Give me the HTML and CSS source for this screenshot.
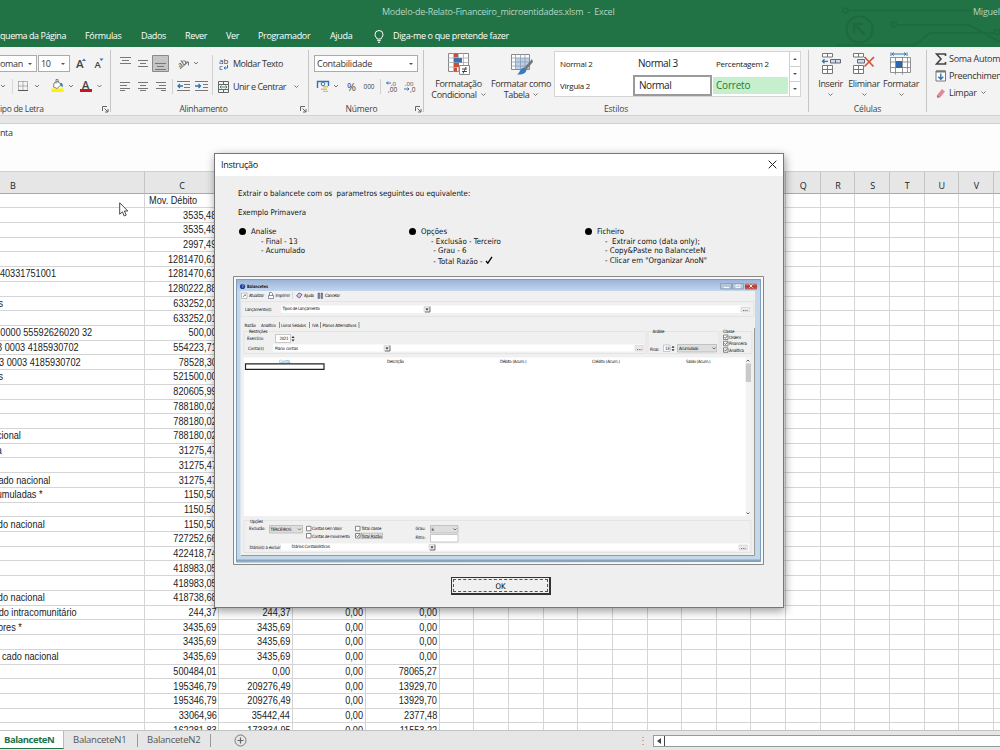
FILE: index.html
```html
<!DOCTYPE html>
<html lang="pt-PT">
<head>
    <meta charset="UTF-8">
    <meta name="viewport" content="width=device-width, initial-scale=1.0">
    <title>Modelo-de-Relato-Financeiro_microentidades.xlsm - Excel</title>
    <link rel="stylesheet" href="styles.css">
</head>
<body>
    <header class="top">
        <svg class="circuit" viewBox="830 0 170 47" width="170" height="47">
            <g fill="none" stroke="#1e693f" stroke-width="1.6">
                <circle cx="845.500" cy="10.500" r="2.500"/><path d="M848 10.500H972"/>
                <circle cx="894" cy="24.500" r="2.500"/><path d="M897 25H969L1000 42"/>
                <path d="M836 45H915L930 33H995"/><circle cx="997" cy="32" r="2.500"/>
                <circle cx="859.500" cy="29.500" r="13" stroke-width="2.200"/>
                <path d="M865 35L855 25M854 33V24H863" stroke-width="2.600"/>
            </g>
        </svg>
        <div class="title-row">
            <span class="doc-title">Modelo-de-Relato-Financeiro_microentidades.xlsm &nbsp;-&nbsp; Excel</span>
            <span class="user">Miguel</span>
        </div>
        <nav class="menu">
            <span class="m-esquema">quema da Página</span>
            <span class="m-formulas">Fórmulas</span>
            <span class="m-dados">Dados</span>
            <span class="m-rever">Rever</span>
            <span class="m-ver">Ver</span>
            <span class="m-prog">Programador</span>
            <span class="m-ajuda">Ajuda</span>
            <svg class="bulb" viewBox="0 0 10 13" width="10" height="13"><path d="M3 9C3 7.500 1 7 1 4.500a4 4 0 0 1 8 0C9 7 7 7.500 7 9ZM3.300 10.600H6.700M4 12.300H6" fill="none" stroke="#fff" stroke-width="1"/></svg>
            <span class="m-tell">Diga-me o que pretende fazer</span>
        </nav>
    </header>

    <section class="ribbon">
        <div class="group g-font">
            <div class="row">
                <span class="combo c-font">oman<i class="tri"></i></span>
                <span class="combo c-size">10<i class="tri"></i></span>
                <svg viewBox="70 55 40 18" width="40" height="18">
                    <text x="76" y="68" class="ico-a" font-size="11.500">A</text><path d="M82 61l2-2.500 2 2.500z" fill="#2f75b5"/>
                    <text x="94.500" y="68" class="ico-a" font-size="9.500">A</text><path d="M99.500 58.500h4l-2 2.500z" fill="#2f75b5"/>
                </svg>
            </div>
            <svg class="strip" viewBox="0 76 110 20" width="110" height="20">
                <path d="M1 85l2 2 2-2M35 85l2 2 2-2M69 85l2 2 2-2M97.500 85l2 2 2-2" class="chev"/>
                <path d="M12.500 79V94" stroke="#d8d8d8"/>
                <path d="M18.500 81.500H27.500V90M18.500 81.500V90M23 81.500V90M18.500 86H27.500" fill="none" stroke="#777" stroke-dasharray="1 1"/><path d="M18 90.500H28" stroke="#555"/>
                <path d="M51.500 88.500H63.500V92H51.500z" fill="#fff200"/><path d="M54 83l4-2 3 4-4 3.500-3.500-1.500zM56 83.500V79.500h2V83" fill="#fff" stroke="#777" stroke-width=".9"/><path d="M60 83c3 0 3 2 2.500 4.500-1.500-1-1.500-3-2.500-4.500z" fill="#2f75b5"/>
                <text x="82" y="88.500" class="ico-a" font-size="11">A</text><path d="M80 89H92V92H80z" fill="#c4161c"/>
            </svg>
            <div class="label"><span class="l-font">ipo de Letra</span><svg class="launch" viewBox="0 0 7 7" width="7" height="7"><path d="M.5 5V.5H5M2.500 2.500L6 6M6 3V6H3"/></svg></div>
        </div>

        <div class="group g-align">
            <svg class="align-icons" viewBox="111 53 106 44" width="106" height="44">
                <path d="M152.500 55.500H168.500V71.500H152.500z" fill="#c5c5c5" stroke="#8a8a8a"/>
                <g stroke="#777" stroke-width="1" fill="none">
                    <path d="M120 57.500H131M122 60.500H129M120 63.500H131M138 60.500H148M140 63.500H146M138 66.500H148M155 63.500H166M157 66.500H164M155 69.500H166"/>
                    <path d="M120 82.500H130M120 85.500H127M120 88.500H130M120 90.500H125M138 82.500H148M140 85.500H146M138 88.500H148M140 90.500H146M156 82.500H166M159 85.500H166M156 88.500H166M161 90.500H166"/>
                    <path d="M177 81.500H190M184 84.500H190M184 87.500H190M177 90.500H190M195 81.500H208M203 84.500H208M203 87.500H208M195 90.500H208"/>
                    <path d="M180 69l8-7M185 62h3.500v3.500"/>
                </g>
                <path d="M183 86H178M180 84l-2 2 2 2M195 86H200.500M198.500 84l2 2-2 2" fill="none" stroke="#2f75b5" stroke-width="1.300"/>
                <text x="178" y="66" font-size="7.500" class="ico-t" transform="rotate(-35 182 64)">ab</text>
                <path d="M194 62l2 2 2-2" class="chev"/>
                <path d="M172.500 79V94M212.500 55V95" stroke="#d0d0d0"/>
            </svg>
            <div class="wraps">
                <div class="wrap-row"><svg viewBox="217 56 12 14" width="12" height="14"><text x="219" y="63" font-size="8" class="ico-t">ab</text><text x="219" y="69" font-size="8" class="ico-t">c</text><path d="M227.500 64v3H224M225.500 65.500L224 67l1.500 1.500" fill="none" stroke="#2f75b5"/></svg><span class="t-moldar">Moldar Texto</span></div>
                <div class="wrap-row"><svg viewBox="217 80 12 12" width="12" height="12"><path d="M218.500 80.500H228.500V91.500H218.500zM218.500 83.500H228.500M218.500 88.500H228.500M223.500 80.500V83.500M223.500 88.500V91.500" fill="none" stroke="#666"/><path d="M220 86H227M221.500 84.500L220 86l1.500 1.500M225.500 84.500L227 86l-1.500 1.500" fill="none" stroke="#22764c" stroke-width=".8"/></svg><span class="t-unir">Unir e Centrar</span><svg class="c-unir" viewBox="0 0 5 3" width="5" height="3"><path d="M.5.500l2 2 2-2" class="chev"/></svg></div>
            </div>
            <div class="label"><span class="l-align">Alinhamento</span><svg class="launch" viewBox="0 0 7 7" width="7" height="7"><path d="M.5 5V.5H5M2.500 2.500L6 6M6 3V6H3"/></svg></div>
        </div>

        <div class="group g-num">
            <div class="row"><span class="combo c-num">Contabilidade<i class="tri"></i></span></div>
            <svg class="strip" viewBox="309 76 114 20" width="114" height="20">
                <path d="M317.500 88V81.500H328.500V86" fill="none" stroke="#2f75b5" stroke-width="1.400"/><circle cx="323" cy="84" r="1.800" fill="none" stroke="#2f75b5"/>
                <path d="M323 86h5v1.500h-5zM321 88.500h6v1.500h-6zM323 90.800h5v1.200h-5z" fill="#e0bd77"/>
                <path d="M334 85l2 2 2-2" class="chev"/>
                <text x="347" y="90.500" class="ico-t" font-size="11" textLength="9" lengthAdjust="spacingAndGlyphs">%</text>
                <text x="363.500" y="88.500" class="ico-t" font-size="7" textLength="11" lengthAdjust="spacingAndGlyphs">000</text>
                <path d="M380.500 79V94" stroke="#d0d0d0"/>
                <text x="391" y="85.500" class="ico-t" font-size="6">,0</text><text x="388" y="91.500" class="ico-t" font-size="6.500">,00</text>
                <text x="405" y="85.500" class="ico-t" font-size="6">,00</text><text x="410" y="91.500" class="ico-t" font-size="6.500">,0</text>
                <path d="M391 83H386.500M388 81.500L386.500 83l1.500 1.500M404 89H409M407.500 87.500L409 89l-1.500 1.500" fill="none" stroke="#2f75b5"/>
            </svg>
            <div class="label"><span class="l-num">Número</span><svg class="launch" viewBox="0 0 7 7" width="7" height="7"><path d="M.5 5V.5H5M2.500 2.500L6 6M6 3V6H3"/></svg></div>
        </div>

        <div class="group g-styles">
            <div class="styles-row">
                <div class="big b-cond">
                    <svg viewBox="448 52 24 24" width="24" height="24">
                        <path d="M449.500 53.500H469.500V71.500H449.500z" fill="#fff" stroke="#888"/><path d="M449 58H470M449 62.500H470M449 67H470M454.500 53V72M459.500 53V72M464.500 53V72" stroke="#aaa" stroke-width=".8"/>
                        <path d="M455 53.500h4v4h-4zM455 63h5v4h-5zM455 67.500h3v4h-3z" fill="#c8513b"/><path d="M455 58h8v4.500h-8z" fill="#3f6fae"/>
                        <path d="M460.500 65.500H470.500V74.500H460.500z" fill="#fff" stroke="#888"/><path d="M463 69H468M463 71.500H468M467 67l-3 6.500" stroke="#333" stroke-width=".9"/>
                    </svg>
                    <span class="t-formatacao">Formatação</span>
                    <span class="t-cond">Condicional<svg viewBox="0 0 5 3" width="5" height="3"><path d="M.5.500l2 2 2-2" class="chev"/></svg></span>
                </div>
                <div class="big b-table">
                    <svg viewBox="508 52 24 24" width="24" height="24">
                        <path d="M510.500 54.500H528.500V69.500H510.500z" fill="#fff" stroke="#888"/><path d="M514.500 58H528V69H514.500z" fill="#bcd0e8"/><path d="M510 58H529M510 62H529M510 66H529M514.500 54V70M519.500 54V70M524 54V70" stroke="#8d9cae" stroke-width=".8"/>
                        <path d="M531 59l-8 9 2 2 7-8z" fill="#777"/><path d="M522.500 67.500l3 2.500c-1 4-5 5-9.500 4.500 3-1.500 2.500-5.500 6.500-7z" fill="#3a7abd"/>
                    </svg>
                    <span class="t-formatar">Formatar como</span>
                    <span class="t-tabela">Tabela<svg viewBox="0 0 5 3" width="5" height="3"><path d="M.5.500l2 2 2-2" class="chev"/></svg></span>
                </div>
                <div class="gallery">
                    <div class="cells">
                        <span class="small">Normal 2</span><span class="large">Normal 3</span><span class="small pct">Percentagem 2</span>
                        <span class="small">Vírgula 2</span><span class="large selected">Normal</span><span class="large good">Correto</span>
                    </div>
                    <div class="scroller">
                        <span><i class="tri up"></i></span><span><i class="tri"></i></span><span class="more"><i class="tri"></i></span>
                    </div>
                </div>
            </div>
            <div class="label"><span class="l-styles">Estilos</span></div>
        </div>

        <div class="group g-cells">
            <div class="cells-row">
                <div class="big">
                    <svg viewBox="819 52 22 24" width="22" height="24"><path d="M821.500 53.500H831.500V57H821.500zM826.500 53.500V57M821.500 65.500H831.500V73.500H821.500zM826.500 65.500V73.500M821.500 69.500H831.500" fill="#fff" stroke="#777"/><path d="M829.500 59.500H839.500V63H829.500zM834.500 59.500V63" fill="#cfdcec" stroke="#667"/><path d="M827 61.300H821.500M823.500 59.300l-2 2 2 2" fill="none" stroke="#2f75b5" stroke-width="1.300"/></svg>
                    <span class="t-ins">Inserir</span><svg class="bc" viewBox="0 0 5 3" width="5" height="3"><path d="M.5.500l2 2 2-2" class="chev"/></svg>
                </div>
                <div class="big">
                    <svg viewBox="852 52 24 24" width="24" height="24"><path d="M853.500 53.500H863.500V57H853.500zM858.500 53.500V57M853.500 65.500H863.500V73.500H853.500zM858.500 65.500V73.500M853.500 69.500H863.500" fill="#fff" stroke="#777"/><path d="M857.500 59.500H864.500V63H857.500z" fill="#cfdcec" stroke="#667"/><path d="M864.500 57l9 9.500M874 57l-9.500 9.500" stroke="#d2553a" stroke-width="1.700"/></svg>
                    <span class="t-eli">Eliminar</span><svg class="bc" viewBox="0 0 5 3" width="5" height="3"><path d="M.5.500l2 2 2-2" class="chev"/></svg>
                </div>
                <div class="big">
                    <svg viewBox="889 52 24 24" width="24" height="24"><path d="M891 52.500V56M907 52.500V56M892 54H906M894 52.500L892 54l2 1.500M904 52.500L906 54l-2 1.500" fill="none" stroke="#2f75b5"/><path d="M890.500 57.500H910.500V72.500H890.500zM890.500 62H910.500M890.500 67.500H910.500M895.500 57.500V74.500M902.500 57.500V74.500M907.500 57.500V72.500" fill="#fff" stroke="#888" stroke-width=".9"/><path d="M896 61H902V68H896z" fill="#2e68a8"/></svg>
                    <span class="t-fmt">Formatar</span><svg class="bc" viewBox="0 0 5 3" width="5" height="3"><path d="M.5.500l2 2 2-2" class="chev"/></svg>
                </div>
            </div>
            <div class="label"><span class="l-cells">Células</span></div>
        </div>

        <div class="group g-edit">
            <div class="edit-row"><svg viewBox="0 0 12 12" width="12" height="12"><path d="M10.500 3V1H1.500L6 6 1.500 11H10.500V9" fill="none" stroke="#444" stroke-width="1.600"/></svg><span class="t-soma">Soma Autom</span></div>
            <div class="edit-row"><svg viewBox="0 0 12 12" width="12" height="12"><path d="M1 1H10.500V11H1z" fill="#fff" stroke="#777"/><path d="M1 1.500H10.500" stroke="#777" stroke-width="2"/><path d="M5.800 3.500V9M3.300 6.700L5.800 9.200 8.300 6.700" fill="none" stroke="#2f75b5" stroke-width="1.400"/></svg><span class="t-preen">Preenchimen</span></div>
            <div class="edit-row"><svg viewBox="0 0 12 12" width="12" height="12"><path d="M7 2l3 2.500-4.500 5.500-3-2.500z" fill="#e5869a"/><path d="M2.300 7.500l3 2.500-1 .8-2.500-.3z" fill="#b46c7c"/></svg><span class="t-limpar">Limpar</span><svg class="bc" viewBox="0 0 5 3" width="5" height="3"><path d="M.5.500l2 2 2-2" class="chev"/></svg></div>
        </div>
    </section>

    <div class="formula-gap"></div>
    <div class="formula-bar">nta</div>

    <main class="sheet">
        <div class="sheet-row head" id="head"></div>
        <div id="rows"></div>
    </main>

    <footer class="tabs">
        <span class="tab active">BalanceteN</span>
        <span class="tab">BalanceteN1</span>
        <span class="tab">BalanceteN2</span>
        <svg class="plus" viewBox="0 0 13 13" width="13" height="13"><circle cx="6.500" cy="6.500" r="5.500" fill="none" stroke="#777"/><path d="M6.500 3.500V9.500M3.500 6.500H9.500" stroke="#666" stroke-width="1.200"/></svg>
        <span class="dots">⋮</span>
        <div class="hscroll"><span><i class="tri left"></i></span></div>
    </footer>

    <svg class="cursor" viewBox="0 0 10 15" width="10" height="15"><path d="M.7.800V12.300L3.400 9.800 5.200 14 7.200 13.100 5.400 9H8.800z" fill="#fff" stroke="#333" stroke-width=".9"/></svg>

    <div class="dialog">
        <div class="dialog-title"><span>Instrução</span><svg viewBox="0 0 9 9" width="9" height="9"><path d="M.7.700l7.600 7.600M8.300.700L.7 8.300" stroke="#222" stroke-width="1"/></svg></div>
        <div class="dialog-body">
            <p class="lead">Extrair o balancete com os&nbsp; parametros seguintes ou equivalente:</p>
            <p class="example">Exemplo Primavera</p>
            <div class="notes">
                <div class="note n1"><b class="dot"></b><ul><li class="h">Analise</li><li>- Final - 13</li><li>- Acumulado</li></ul></div>
                <div class="note n2"><b class="dot"></b><ul><li class="h">Opções</li><li>- Exclusão - Terceiro</li><li>&nbsp;- Grau - 6</li><li>&nbsp;- Total Razão - <svg viewBox="0 0 8 8" width="8" height="8"><path d="M1 5L2.800 7.200 7 .8" fill="none" stroke="#000" stroke-width="1.300"/></svg></li></ul></div>
                <div class="note n3"><b class="dot"></b><ul><li class="h">Ficheiro</li><li>-&nbsp; Extrair como (data only);</li><li>- Copy&amp;Paste no BalanceteN</li><li>- Clicar em "Organizar AnoN"</li></ul></div>
            </div>

            <!-- Balancetes window, example of the extraction settings -->
            <svg class="shot" viewBox="233 276 531 289" width="531" height="289">
                <defs>
                    <linearGradient id="bar" x1="0" y1="0" x2="0" y2="1"><stop offset="0" stop-color="#97b2d9"/><stop offset="1" stop-color="#c3d6ec"/></linearGradient>
                    <linearGradient id="red" x1="0" y1="0" x2="0" y2="1"><stop offset="0" stop-color="#d9a09a"/><stop offset=".5" stop-color="#b23a30"/><stop offset="1" stop-color="#c8685c"/></linearGradient>
                </defs>
                <path d="M233.500 276.500H763.500V564.500H233.500z" fill="#f8f8f8" stroke="#888"/>
                <path d="M236 279H761V562H236z" fill="#c5d8ea"/>
                <path d="M236 279H761V291H236z" fill="url(#bar)"/>
                <path d="M236.500 562V279.500H760.500V561.500z" fill="none" stroke="#7f9dbd"/>
                <path d="M237 560.500H760" stroke="#86a5bd" stroke-width="2"/>
                <path d="M240.500 291H755V555.500H240.500z" fill="#f0f0f0"/>
                <path d="M241 555.500H754.500V328" fill="none" stroke="#999"/>
                <path d="M720.500 283.500H731.500V289H720.500zM732.500 283.500H743.500V289H732.500z" fill="#b5c6da" stroke="#8295ab" stroke-width=".7"/><path d="M745 283H757V289.500H745z" fill="url(#red)"/>
                <path d="M723.500 287.500H729M736 285H740V287.500H736zM749.500 284.500l3 3M752.500 284.500l-3 3" fill="none" stroke="#fff" stroke-width=".9"/>
                <circle cx="242.500" cy="286.500" r="2.600" fill="#1e3c97"/><text x="241.500" y="288.200" font-size="4.500" fill="#fff">?</text>
                <g class="tiny">
                    <text x="247" y="288.300" textLength="21" lengthAdjust="spacingAndGlyphs" font-weight="bold">Balancetes</text>
                    <text x="249" y="297" textLength="15">Atualizar</text><text x="275.500" y="297" textLength="14.500">Imprimir</text><text x="304" y="297" textLength="10">Ajuda</text><text x="325" y="297" textLength="15">Cancelar</text>
                </g>
                <path d="M241.500 293H247V298.500H241.500z" fill="#fff" stroke="#999" stroke-width=".6"/><path d="M243 297l2-2.500.5 1.500" fill="none" stroke="#375" stroke-width=".8"/>
                <path d="M268.500 295.500H273.500V298.500H268.500zM269.500 295.500V292.500H271.500L272.500 293.500V295.500" fill="#fff" stroke="#57697f" stroke-width=".7"/>
                <path d="M296.500 296l2.500-3 3 1.500-2.500 3.500z" fill="#d9c9ea" stroke="#5b3f86" stroke-width=".8"/>
                <path d="M318 293H319.500V298.500H318zM321 293H322.500V298.500H321z" fill="#7a93b6" stroke="#445" stroke-width=".5"/>
                <path d="M292.500 292V299" stroke="#ccc" stroke-width=".7"/>
                <g fill="none" stroke="#dedede" stroke-width=".7"><path d="M241 301.500H754V316.500H241zM244 331.500H646V353.500H244zM648 331.500H719V353.500H648zM721 331.500H752V353.500H721zM244 520.500H751V552.500H244z"/></g>
                <path d="M281 305.500H750V313H281zM273 344.500H643V351.500H273zM244 357.500H751V516H244zM281 543.500H749V550.500H281z" fill="#fff"/>
                <g fill="#e9e9e9" stroke="#ccc" stroke-width=".6">
                    <path d="M424 306.500H429.500V312H424zM741 307H749.500V312H741zM384 345.500H389.500V351H384zM635 345.500H643V351H635zM429 544.500H434.500V550H429zM739 545H747.500V550H739z"/>
                    <path d="M677.500 344.500H716.500V352H677.500zM269.500 525.500H302.500V533H269.500zM430.500 525.500H458V533H430.500z" fill="#dedede" stroke="#aaa"/>
                    <path d="M275.500 334.500H290.500V342.500H275.500zM663.500 345H670V351.500H663.500zM430.500 534.500H458V542H430.500z" fill="#fff" stroke="#aaa"/>
                </g>
                <path d="M425 312H430V306.500M385 351H390V345.500M430 550H435V544.500" fill="none" stroke="#555" stroke-width=".8"/>
                <path d="M425.500 308.500h3l-1.500 2zM385.500 347.500h3l-1.500 2zM430.500 546.500h3l-1.500 2zM291.500 338h3l-1.500-2zM291.500 339.500h3l-1.500 2zM671.500 347.700h3l-1.500-2zM671.500 349.200h3l-1.500 2z" fill="#222"/>
                <path d="M743 310.500H748M637 349.500H642M741 548.500H746" stroke="#666" stroke-width=".9" stroke-dasharray="1 .8"/>
                <path d="M712.500 347.500l1.500 1.500 1.500-1.500M298 528.500l1.500 1.500 1.500-1.500M453.500 528.500l1.500 1.500 1.500-1.500" fill="none" stroke="#555" stroke-width=".8"/>
                <path d="M745.500 357.500H751V516H745.500z" fill="#f3f3f3"/><path d="M745.800 363.500H751V382H745.800z" fill="#c9c9c9"/><path d="M746.500 361.500L748 360l1.500 1.500M746.500 512.500L748 514l1.500-1.500" fill="none" stroke="#444" stroke-width=".8"/>
                <path d="M279.500 322V328M309.500 322V328M320.500 322V328M359 322V328" stroke="#777" stroke-width=".8"/>
                <path d="M245.500 363.800H324V369.300H245.500z" fill="#fff" stroke="#222" stroke-width="1.200"/>
                <g fill="#fff" stroke="#555" stroke-width=".7"><path d="M723.500 335H728V339.500H723.500zM723.500 341.300H728V345.800H723.500zM723.500 347.800H728V352.300H723.500zM306.500 526.300H311V530.800H306.500zM306.500 533.500H311V538H306.500zM355.500 526.300H360V530.800H355.500zM355.500 533.500H360V538H355.500z"/></g>
                <path d="M724.500 337l1 1.300 1.800-2.300M724.500 343.300l1 1.300 1.800-2.300M724.500 349.800l1 1.300 1.800-2.300M356.500 535.500l1 1.300 1.800-2.300" fill="none" stroke="#333" stroke-width=".7"/>
                <path d="M361 533.200H382.500V538.500H361z" fill="#e3e3e3" stroke="#666" stroke-width=".5" stroke-dasharray="1 .6"/>
                <g class="tiny">
                    <text x="245" y="310.800" textLength="26.500">Lançamento(s)</text><text x="282.500" y="310.300" textLength="37.500">Tipos de Lançamento</text>
                    <text x="244.500" y="326.500" textLength="11.500">Razão</text><text x="261" y="326.500" textLength="15">Analítico</text><text x="281" y="326.500" textLength="25">Livros Selados</text><text x="312" y="326.500" textLength="6.500">IVA</text><text x="322.500" y="326.500" textLength="34">Planos Alternativos</text>
                    <text x="249" y="333" textLength="18.500">Restrições</text><text x="247" y="339.500" textLength="17">Exercício:</text><text x="279.500" y="340.300" textLength="9">2021</text>
                    <text x="248" y="350" textLength="16">Conta(s)</text><text x="275" y="349.500" textLength="23">Plano contas</text>
                    <text x="652.500" y="333" textLength="12">Análise</text><text x="650" y="350.500" textLength="9.500">Final:</text><text x="665" y="350" textLength="4.500">13</text><text x="679" y="350" textLength="19.500">Acumulado</text>
                    <text x="723" y="333" textLength="11.500">Classe</text><text x="729" y="339" textLength="12">Ordem</text><text x="729" y="345.300" textLength="18">Financeira</text><text x="729" y="351.700" textLength="15">Analítica</text>
                    <text x="279" y="362.500" textLength="11" fill="#3e8fc0">Conta</text><text x="387" y="362.500" textLength="17">Descrição</text><text x="500" y="362.500" textLength="26.500">Débito (Acum.)</text><text x="592" y="362.500" textLength="28">Crédito (Acum.)</text><text x="686" y="362.500" textLength="24.500">Saldo (Acum.)</text>
                    <text x="250" y="522.800" textLength="13">Opções</text><text x="249" y="530.300" textLength="16.500">Exclusão:</text><text x="270.500" y="531" textLength="21">TERCEIROS</text>
                    <text x="312" y="530.300" textLength="30">Contas sem Valor</text><text x="312" y="537.700" textLength="38">Contas de movimento</text><text x="361.500" y="530.300" textLength="20">Total classe</text><text x="361.500" y="537.700" textLength="20.500">Total Razão</text>
                    <text x="415.500" y="530.300" textLength="10">Grau:</text><text x="431.500" y="531">6</text><text x="415.500" y="539.300" textLength="10">Filtro:</text>
                    <text x="249.500" y="548.700" textLength="31">Diário(s) a excluir</text><text x="291.500" y="548.300" textLength="38.500">Diários Contabilísticos</text>
                </g>
            </svg>
            <button class="ok"><span>OK</span></button>
        </div>
    </div>

    <script>
        // [texto da coluna B, fim do texto em px, C, D, E, F]
        const linhas = [
            ["", 0, "Mov. Débito"],
            ["", 0, "3535,48"],
            ["", 0, "3535,48"],
            ["", 0, "2997,49"],
            ["", 0, "1281470,61"],
            ["40331751001", 56, "1281470,61"],
            ["", 0, "1280222,88"],
            ["s", 3, "633252,01"],
            ["", 0, "633252,01"],
            ["0000 55592626020 32", 92, "500,00"],
            ["3 0003 4185930702", 79, "554223,71"],
            ["3 0003 4185930702", 81, "78528,30"],
            ["s", 3, "521500,00"],
            ["", 0, "820605,99"],
            ["", 0, "788180,02"],
            ["", 0, "788180,02"],
            ["cional", 21, "788180,02"],
            ["a", 2, "31275,47"],
            ["", 0, "31275,47"],
            ["ado nacional", 50, "31275,47"],
            ["umuladas *", 43, "1150,50"],
            ["", 0, "1150,50"],
            ["do nacional", 45, "1150,50"],
            ["", 0, "727252,66"],
            ["", 0, "422418,74"],
            ["", 0, "418983,05"],
            ["", 0, "418983,05"],
            ["do nacional", 45, "418738,68"],
            ["do intracomunitário", 77, "244,37", "244,37", "0,00", "0,00"],
            ["ores *", 22, "3435,69", "3435,69", "0,00", "0,00"],
            ["", 0, "3435,69", "3435,69", "0,00", "0,00"],
            ["cado nacional", 59, "3435,69", "3435,69", "0,00", "0,00"],
            ["", 0, "500484,01", "0,00", "0,00", "78065,27"],
            ["", 0, "195346,79", "209276,49", "0,00", "13929,70"],
            ["", 0, "195346,79", "209276,49", "0,00", "13929,70"],
            ["", 0, "33064,96", "35442,44", "0,00", "2377,48"],
            ["", 0, "162281,83", "173834,95", "0,00", "11553,22"]
        ];
        const colunas = "BCDEFGHIJKLMNOPQRSTUVW".split("");

        document.getElementById("head").innerHTML = colunas.map(c => `<span>${c}</span>`).join("");

        document.getElementById("rows").innerHTML = linhas.map((linha, n) => {
            const celulas = colunas.map((c, i) => {
                if (i === 0) {
                    return `<span style="padding-right:${144 - linha[1]}px"><em>${linha[0]}</em></span>`;
                }
                const texto = i < 5 ? linha[i + 1] || "" : "";
                return `<span${n === 0 ? ' class="left"' : ""}><em>${texto}</em></span>`;
            });
            return `<div class="sheet-row">${celulas.join("")}</div>`;
        }).join("");
    </script>
</body>
</html>
```
FILE: styles.css
```css
* {
    box-sizing: border-box;
}

body {
    margin: 0;
    width: 1000px;
    height: 750px;
    overflow: hidden;
    position: relative;
    display: flex;
    flex-direction: column;
    background: #fff;
    font-family: "Open Sans", "Noto Sans", sans-serif;
    font-size: 9px;
    color: #333;
    white-space: nowrap;
}

svg {
    display: block;
    flex: none;
}

/* barra de título e menu */
.top {
    height: 47px;
    flex: none;
    background: #217346;
    color: #e8f2ec;
    position: relative;
}

.circuit {
    position: absolute;
    right: 0;
    top: 0;
}

.title-row {
    position: relative;
    display: flex;
    height: 24px;
    line-height: 24px;
    padding-left: 382px;
    color: #b5d3c1;
    letter-spacing: -0.240px;
}

.doc-title {
    width: 591px;
}

.menu {
    position: relative;
    display: flex;
    height: 23px;
    line-height: 24px;
    color: #fff;
    letter-spacing: -0.340px;
}

.m-esquema {
    width: 85px;
    letter-spacing: -0.450px;
}

.m-formulas { width: 56px; }
.m-dados { width: 44px; }
.m-rever { width: 41px; }
.m-ver { width: 32px; }
.m-prog { width: 72px; }
.m-ajuda { width: 44px; }

.bulb {
    margin: 6px 9px 0 0;
}

/* friso */
.ribbon {
    height: 69px;
    flex: none;
    display: flex;
    background: #f3f3f3;
    border-bottom: 1px solid #d2d2d2;
    letter-spacing: -0.350px;
}

.group {
    height: 62px;
    margin-top: 3px;
    border-right: 1px solid #c6c6c6;
    display: flex;
    flex-direction: column;
    position: relative;
    flex: none;
}

.g-font { width: 111px; }
.g-num { width: 115px; }
.g-styles { width: 385px; }
.g-cells { width: 118px; }
.g-edit { width: 74px; border-right: 0; padding: 0 0 0 8px; }

.g-align {
    width: 198px;
    display: grid;
    grid-template-columns: 106px 1fr;
    grid-template-rows: 52px 13px;
}

.row {
    display: flex;
    height: 17px;
    margin-top: 5px;
}

.combo {
    height: 17px;
    border: 1px solid #ababab;
    background: #fff;
    line-height: 15px;
    display: flex;
    justify-content: space-between;
    align-items: center;
    padding: 0 4px 0 2px;
}

.c-font {
    width: 37px;
    border-left: 0;
    padding-left: 0;
    margin-right: 1px;
}

.c-size { width: 32px; }

.c-num {
    width: 104px;
    margin-left: 5px;
    letter-spacing: -0.250px;
}

.tri {
    border: 2px solid transparent;
    border-top: 2.500px solid #555;
    border-bottom: 0;
}

.tri.up {
    border-top: 0;
    border-bottom: 2.500px solid #555;
}

.tri.left {
    border: 3px solid transparent;
    border-right: 4px solid #444;
    border-left: 0;
}

.strip {
    margin-top: 4px;
}

.chev {
    fill: none;
    stroke: #777;
    stroke-width: 1;
}

.ico-a {
    font-family: "Open Sans", sans-serif;
    fill: #444;
    font-weight: 600;
}

.ico-t {
    font-family: "Open Sans", sans-serif;
    fill: #444;
    letter-spacing: 0;
}

.label {
    height: 13px;
    line-height: 13px;
    margin: auto 0 -3px;
    display: flex;
    justify-content: center;
    position: relative;
    font-size: 8.500px;
    letter-spacing: -0.150px;
    color: #444;
    grid-column: 1 / 3;
}

.g-font .label {
    justify-content: flex-start;
}

.g-align .label {
    margin: 0;
}

.l-font { letter-spacing: -0.300px; }
.l-num { margin-right: 9px; }
.l-align { margin-right: 12px; letter-spacing: -0.250px; }

.launch {
    position: absolute;
    right: 1px;
    top: 4px;
    fill: none;
    stroke: #666;
}

.align-icons {
    margin: 3px 0 0 0;
}

.wraps {
    padding-top: 2px;
}

.wrap-row {
    display: flex;
    align-items: center;
    height: 23px;
}

.wrap-row span {
    margin-left: 4px;
    letter-spacing: -0.480px;
    line-height: 12px;
}

.c-unir {
    margin-left: 8px;
}

.styles-row {
    display: flex;
    height: 49px;
}

.big {
    display: flex;
    flex-direction: column;
    align-items: center;
    line-height: 11px;
    padding-top: 2px;
}

.big > svg:first-child {
    margin-bottom: 2px;
}

.big span {
    display: flex;
    align-items: center;
}

.big span svg {
    margin-left: 4px;
}

.b-cond { width: 69px; }
.b-table { width: 56px; margin-right: 5px; }

.gallery {
    width: 247px;
    height: 46px;
    margin-top: 1px;
    border: 1px solid #d5d5d5;
    background: #fff;
    display: flex;
    color: #222;
}

.cells {
    width: 235px;
    display: grid;
    grid-template-columns: 77px 79px 75px;
    grid-template-rows: 22px 22px;
    column-gap: 1px;
    align-items: center;
}

.cells span {
    height: 17px;
    line-height: 17px;
    padding-left: 5px;
}

.cells .small {
    font-size: 8px;
    letter-spacing: -0.250px;
}

.cells .pct {
    padding-left: 3px;
}

.cells .large {
    font-size: 10px;
    letter-spacing: -0.450px;
}

.cells .selected {
    height: 21px;
    line-height: 17px;
    border: 2px solid #9a9a9a;
    padding-left: 4px;
}

.cells .good {
    background: #c6efce;
    color: #237b2f;
    padding-left: 3px;
    letter-spacing: -0.200px;
}

.scroller {
    width: 11px;
    border-left: 1px solid #d0d0d0;
    display: flex;
    flex-direction: column;
}

.scroller span {
    flex: 1;
    display: flex;
    align-items: center;
    justify-content: center;
}

.scroller span + span {
    border-top: 1px solid #d0d0d0;
}

.more .tri {
    box-shadow: 0 -3px 0 -1px #666;
}

.cells-row {
    display: flex;
    padding-left: 5px;
}

.cells-row .big:nth-child(1) { width: 33px; }
.cells-row .big:nth-child(2) { width: 34px; }
.cells-row .big:nth-child(3) { width: 40px; }

.cells-row .bc {
    margin-top: 4px;
}

.edit-row {
    display: flex;
    align-items: center;
    height: 17px;
}

.edit-row span {
    margin-left: 2px;
    letter-spacing: -0.300px;
}

.edit-row .bc {
    margin-left: 4px;
}

/* barra de fórmulas */
.formula-gap {
    height: 8px;
    flex: none;
    background: #e6e6e6;
    border-bottom: 1px solid #d0d0d0;
}

.formula-bar {
    height: 47px;
    flex: none;
    background: #fdfdfd;
    padding-top: 2px;
    line-height: 14px;
    font-size: 9px;
    letter-spacing: -0.400px;
}

/* folha */
.sheet {
    height: 559px;
    flex: none;
    overflow: hidden;
    font-family: "Liberation Sans", sans-serif;
    font-size: 10.300px;
    color: #222;
}

.sheet-row {
    display: grid;
    grid-template-columns: 145px 74px 73.700px 73.300px 73.800px repeat(17, 34.640px);
    height: 14.730px;
}

.sheet-row span {
    border-right: 1px solid #d4d4d4;
    border-bottom: 1px solid #d4d4d4;
    display: flex;
    justify-content: flex-end;
    align-items: center;
    padding-right: 1.500px;
    overflow: hidden;
    line-height: 14px;
}

.sheet-row em {
    font-style: normal;
    padding-top: 1px;
    transform: scaleX(.89);
    transform-origin: right;
}

.sheet-row .left {
    justify-content: flex-start;
    padding-left: 4px;
}

.sheet-row .left em {
    transform-origin: left;
}

.sheet-row.head {
    height: 22.500px;
    background: #e6e6e6;
    border-top: 1px solid #d0d0d0;
    font-family: "Open Sans", sans-serif;
    font-size: 9px;
}

.sheet-row.head span {
    justify-content: center;
    padding: 8px 0 0 1px;
    border-bottom-color: #aaa;
    border-right-color: #c4c4c4;
}

.sheet-row.head span:first-child {
    padding-right: 119px;
}

/* separadores */
.tabs {
    height: 21px;
    flex: none;
    display: flex;
    background: #e6e6e6;
    border-top: 1px solid #c3c3c3;
    font-size: 9.500px;
    line-height: 19px;
    letter-spacing: -0.250px;
    color: #555;
}

.tab {
    width: 73px;
    height: 13px;
    margin-top: 3px;
    line-height: 12px;
    padding-left: 9px;
    border-right: 1px solid #999;
}

.tab.active {
    width: 64px;
    height: 18px;
    margin: 0;
    line-height: 18px;
    padding-left: 4px;
    background: #fff;
    color: #217346;
    font-weight: bold;
    letter-spacing: -0.480px;
    border-right: 1px solid #bbb;
    border-bottom: 1px solid #217346;
}

.tab:nth-child(2) {
    width: 74px;
}

.plus {
    margin: 3px 0 0 23px;
}

.dots {
    width: 15px;
    margin-left: auto;
    color: #888;
}

.hscroll {
    width: 347px;
    height: 12px;
    margin-top: 4px;
    border: 1px solid #999;
    border-right: 0;
    background: #fff;
}

.hscroll span {
    width: 11px;
    height: 10px;
    border-right: 1px solid #444;
    display: flex;
    align-items: center;
    justify-content: center;
}

.cursor {
    position: absolute;
    left: 119px;
    top: 202px;
}

/* janela Instrução */
.dialog {
    position: absolute;
    left: 214px;
    top: 153px;
    width: 570px;
    height: 455px;
    border: 1px solid #777;
    background: #efefef;
    box-shadow: 1px 3px 9px rgba(0, 0, 0, 0.4);
    color: #111;
}

.dialog-title {
    height: 22px;
    background: #fff;
    display: flex;
    justify-content: space-between;
    align-items: center;
    padding: 0 6px 1px 6px;
    letter-spacing: -0.300px;
}

.dialog-body {
    font-family: "DejaVu Sans Condensed", "DejaVu Sans", sans-serif;
    font-size: 7.800px;
    line-height: 9.600px;
}

.dialog-body p {
    margin: 0 0 0 23px;
}

.lead {
    padding-top: 13px;
}

.dialog-body .example {
    padding-top: 9px;
}

.notes {
    display: flex;
    height: 49px;
    margin: 10px 0 0 24px;
}

.note {
    display: flex;
}

.n1 { width: 170px; }
.n2 { width: 176px; }

.dot {
    width: 7px;
    height: 7px;
    margin: 1px 5px 0 0;
    border-radius: 50%;
    background: #000;
}

.note ul {
    list-style: none;
    margin: 0;
    padding: 0 0 0 10px;
}

.n3 ul {
    padding-left: 8px;
}

.note .h {
    margin-left: -10px;
}

.n3 .h {
    margin-left: -8px;
}

.note li {
    height: 9.600px;
}

.note li svg {
    display: inline;
}

.shot {
    margin-left: 18px;
}

.tiny text {
    font-family: "DejaVu Sans Condensed", "DejaVu Sans", sans-serif;
    font-size: 4.400px;
}

.tiny text:not([fill]) {
    fill: #111;
}

.ok {
    display: block;
    width: 100px;
    height: 18px;
    margin: 12px 0 0 236px;
    padding: 1px;
    border: 1px solid #333;
    border-right-width: 2px;
    border-bottom-width: 2px;
    background: #f0f0f0;
    font: inherit;
    color: #000;
}

.ok span {
    display: block;
    height: 100%;
    line-height: 13px;
    border: 1px dashed #555;
}
```
